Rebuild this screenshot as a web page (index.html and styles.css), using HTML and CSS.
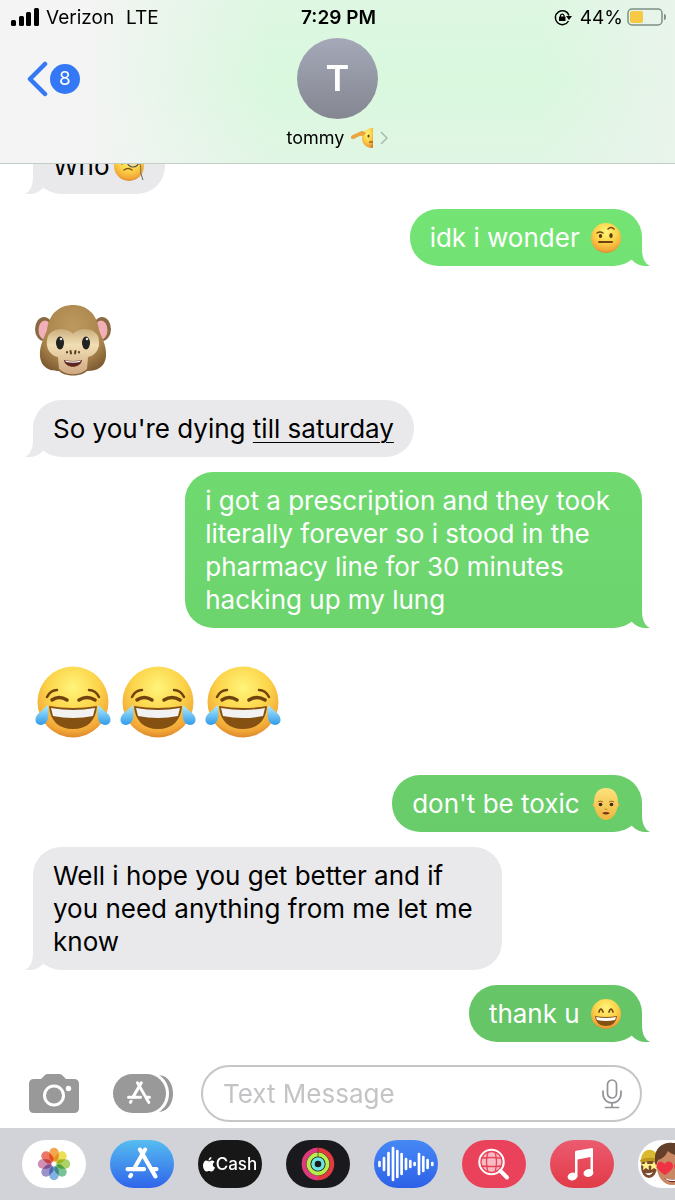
FILE: index.html
```html
<!DOCTYPE html>
<html lang="en">
<head>
	<meta charset="utf-8">
	<meta name="viewport" content="width=device-width, initial-scale=1">
	<title>tommy</title>
	<link rel="stylesheet" href="styles.css">
</head>
<body>
<!-- shared emoji and glyph shapes -->
<svg class="defs" width="0" height="0" aria-hidden="true">
	<defs>
		<radialGradient id="face" cx="50%" cy="30%" r="72%">
			<stop offset="0" stop-color="#fff57a"/>
			<stop offset="0.5" stop-color="#fcd44a"/>
			<stop offset="0.85" stop-color="#f2a838"/>
			<stop offset="1" stop-color="#d9822b"/>
		</radialGradient>
		<linearGradient id="skin" x1="0" y1="0" x2="0" y2="1">
			<stop offset="0" stop-color="#ffe27c"/>
			<stop offset="1" stop-color="#edb63e"/>
		</linearGradient>
		<linearGradient id="tear" x1="0" y1="0" x2="0" y2="1">
			<stop offset="0" stop-color="#b4ecfb"/>
			<stop offset="1" stop-color="#2f9bea"/>
		</linearGradient>
		<radialGradient id="fur" cx="50%" cy="30%" r="70%">
			<stop offset="0" stop-color="#bd9960"/>
			<stop offset="0.7" stop-color="#a88249"/>
			<stop offset="1" stop-color="#7d5c33"/>
		</radialGradient>
		<linearGradient id="muzzle" x1="0" y1="0" x2="0" y2="1">
			<stop offset="0" stop-color="#cbb080"/>
			<stop offset="0.35" stop-color="#f1deb4"/>
			<stop offset="1" stop-color="#cfa880"/>
		</linearGradient>
		<symbol id="emoji-joy" viewBox="0 0 76 76">
			<circle cx="38" cy="38" r="35.500" fill="url(#face)"/>
			<g fill="none" stroke="#70420d" stroke-width="2.500" stroke-linecap="round">
				<path d="M12 33C14 29 18 26 22 26"/>
				<path d="M64 33C62 29 58 26 54 26"/>
				<path d="M17 36Q24 31 32 36" stroke-width="3.500"/>
				<path d="M44 36Q52 31 60 36" stroke-width="3.500"/>
			</g>
			<path d="M14 42Q38 46 62 42C61 57 52 65 38 65C24 65 15 57 14 42Z" fill="#855112"/>
			<path d="M16 44Q38 48 60 44L58 52Q38 56 18 52Z" fill="#f2f2f3"/>
			<path d="M13 41C14 51 14 60 6 61C-1 61 -1 53 4 49Z" fill="url(#tear)"/>
			<path d="M63 41C62 51 62 60 70 61C77 61 77 53 72 49Z" fill="url(#tear)"/>
		</symbol>
		<symbol id="emoji-monkey" viewBox="0 0 76 76">
			<ellipse cx="9" cy="27" rx="9" ry="12" fill="#8a6a42"/>
			<ellipse cx="67" cy="27" rx="9" ry="12" fill="#8a6a42"/>
			<ellipse cx="10" cy="28" rx="6.500" ry="9.500" fill="#f1b0b7"/>
			<ellipse cx="66" cy="28" rx="6.500" ry="9.500" fill="#f1b0b7"/>
			<path d="M38 3C51 3 62 11 64 28C66 34 72 44 71 54C70 66 61 69 52 69C46 75 30 75 24 69C15 69 6 66 5 54C4 44 10 34 12 28C14 11 25 3 38 3Z" fill="url(#fur)"/>
			<path d="M38 32C43 26 58 25 63 34C67 46 60 54 53 55L52 67C45 74 31 74 24 67L23 55C16 54 9 46 13 34C18 25 33 26 38 32Z" fill="url(#muzzle)"/>
			<ellipse cx="25" cy="41" rx="4" ry="6.500" fill="#222"/>
			<ellipse cx="51" cy="41" rx="4" ry="6.500" fill="#222"/>
			<circle cx="26" cy="37" r="1.300" fill="#ddd"/>
			<circle cx="52" cy="37" r="1.300" fill="#ddd"/>
			<path d="M35.500 49L36 51.500M40.500 49L40 51.500M32 50V50.500M44 50V50.500" stroke="#574024" stroke-width="2" stroke-linecap="round"/>
			<path d="M29 58Q38 60 47 58C46 67 30 67 29 58Z" fill="#5e2621"/>
			<path d="M30 58.500Q38 60.500 46 58.500L45 60Q38 61.500 31 60Z" fill="#fff"/>
		</symbol>
		<symbol id="emoji-eyebrow" viewBox="0 0 32 32">
			<circle cx="16" cy="16" r="15" fill="url(#face)"/>
			<g fill="none" stroke="#70420d" stroke-width="1.500" stroke-linecap="round">
				<path d="M7 11Q10 9 13 11"/>
				<path d="M18 7Q21 4 24 7"/>
				<path d="M9 20H22" stroke-width="2"/>
			</g>
			<ellipse cx="10.500" cy="14" rx="1.700" ry="2" fill="#5b390e"/>
			<ellipse cx="21" cy="13.500" rx="1.700" ry="2.500" fill="#5b390e"/>
		</symbol>
		<symbol id="emoji-monocle" viewBox="0 0 32 32">
			<circle cx="16" cy="16" r="15" fill="url(#face)"/>
			<circle cx="20" cy="11" r="6" fill="#f3e29a" stroke="#57564f" stroke-width="1.200"/>
			<ellipse cx="20" cy="11" rx="1.700" ry="2.400" fill="#5b390e"/>
			<ellipse cx="9" cy="12" rx="1.700" ry="2.400" fill="#5b390e"/>
			<path d="M11 20Q15 17 19 20" fill="none" stroke="#855112" stroke-width="1.500" stroke-linecap="round"/>
			<path d="M26 12C29 17 27 21 28 24L30 30" fill="none" stroke="#66655f"/>
		</symbol>
		<symbol id="emoji-bald" viewBox="0 0 32 32">
			<circle cx="4.500" cy="17" r="2" fill="#eab447"/>
			<circle cx="27.500" cy="17" r="2" fill="#eab447"/>
			<path d="M16 0C24 0 28 6 28 14C28 25 22 32 16 32C10 32 4 25 4 14C4 6 8 0 16 0Z" fill="url(#skin)"/>
			<path d="M8 14Q10 12 13 14M19 14Q22 12 24 14" fill="none" stroke="#9b6a20"/>
			<circle cx="10.500" cy="16.500" r="1.800" fill="#3b2b16"/>
			<circle cx="21.500" cy="16.500" r="1.800" fill="#3b2b16"/>
			<path d="M14.500 21Q16 22 17.500 21" fill="none" stroke="#c28a2b"/>
			<path d="M12 25Q16 23 20 25Q16 28 12 25Z" fill="#7d2f22"/>
		</symbol>
		<symbol id="emoji-grin" viewBox="0 0 32 32">
			<circle cx="16" cy="16" r="15" fill="url(#face)"/>
			<path d="M9 14Q11 8 13 14M19 14Q21 8 23 14" fill="none" stroke="#70420d" stroke-width="1.700" stroke-linecap="round"/>
			<path d="M5 18Q16 20 27 18C26 25 22 28 16 28C10 28 6 25 5 18Z" fill="#855112"/>
			<path d="M6 19Q16 21 26 19L25 22Q16 24 7 22Z" fill="#fff"/>
		</symbol>
		<symbol id="emoji-salute" viewBox="0 0 22 22">
			<path d="M22 1V21C15 21 11 17 11 11C11 6 15 1 22 1Z" fill="url(#face)"/>
			<path d="M0 11C0 8 6 7 9 5C12 4 15 5 14 7C12 9 10 8 8 9C5 10 3 13 0 11Z" fill="#f2a63a" stroke="#d98a2c" stroke-width="0.500"/>
			<ellipse cx="17.500" cy="9" rx="1" ry="1.600" fill="#5b390e"/>
			<path d="M18 15H22" stroke="#70420d"/>
		</symbol>
		<symbol id="app-store-a" viewBox="0 0 32 32">
			<g fill="none" stroke="#fff" stroke-width="4" stroke-linecap="round">
				<path d="M19 2.500L8 21.500"/>
				<path d="M14 2.500L29 28.500"/>
				<path d="M2 21.500H18M26 21.500H30"/>
				<path d="M5.500 27L4.500 28.500"/>
			</g>
		</symbol>
	</defs>
</svg>

<div class="app">
	<header class="header">
		<div class="status">
			<div class="carrier">
				<svg width="29" height="18" viewBox="0 0 29 18" aria-hidden="true">
					<rect x="0" y="12" width="5" height="6" rx="1.500"/>
					<rect x="8" y="8" width="5" height="10" rx="1.500"/>
					<rect x="15" y="4" width="5" height="14" rx="1.500"/>
					<rect x="23" y="0" width="5" height="18" rx="1.500"/>
				</svg>
				<span>Verizon</span>
				<span class="network">LTE</span>
			</div>
			<time>7:29 PM</time>
			<div class="power">
				<svg class="lock" width="18" height="17" viewBox="0 0 18 17" aria-hidden="true">
					<path d="M14.500 12A7 7 0 1 1 15 6.500" fill="none" stroke="#000" stroke-width="1.500"/>
					<path d="M12 7H18L15 11Z"/>
					<rect x="5" y="7.500" width="6.500" height="4.500" rx="0.500"/>
					<path d="M6.500 8V6.500A1.800 1.800 0 0 1 10 6.500V8" fill="none" stroke="#000" stroke-width="1.200"/>
				</svg>
				<span>44%</span>
				<svg width="39" height="18" viewBox="0 0 39 18" aria-hidden="true">
					<rect x="1" y="1" width="34" height="16" rx="4" fill="none" stroke="#7d9082" stroke-width="1.500"/>
					<rect x="3" y="3" width="13" height="12" rx="2" fill="#f7c844"/>
					<path d="M37 6Q39 6 39 9Q39 12 37 12Z" fill="#7d9082"/>
				</svg>
			</div>
		</div>
		<div class="nav">
			<button class="back" type="button" aria-label="Back, 8 unread">
				<svg width="21" height="36" viewBox="0 0 21 36" aria-hidden="true">
					<path d="M18 3L3 18L18 33" fill="none" stroke="#3478f6" stroke-width="4.500" stroke-linecap="round" stroke-linejoin="round"/>
				</svg>
				<span class="badge">8</span>
			</button>
			<button class="contact" type="button">
				<span class="avatar">T</span>
				<span class="name">tommy
					<svg width="22" height="22" role="img" aria-label="saluting face"><use href="#emoji-salute"/></svg>
					<svg width="8" height="14" viewBox="0 0 8 14" aria-hidden="true"><path d="M1 1L7 7L1 13" fill="none" stroke="#a9bbad" stroke-width="1.500"/></svg>
				</span>
			</button>
		</div>
	</header>

	<main class="thread">
		<p class="bubble received">Who<svg class="inline" role="img" aria-label="face with monocle"><use href="#emoji-monocle"/></svg></p>
		<p class="bubble sent">idk i wonder <svg class="inline" role="img" aria-label="raised eyebrow"><use href="#emoji-eyebrow"/></svg></p>
		<p class="emoji">
			<svg role="img" aria-label="monkey face"><use href="#emoji-monkey"/></svg>
		</p>
		<p class="bubble received">So you're dying <a href="#saturday">till saturday</a></p>
		<p class="bubble sent">i got a prescription and they took literally forever so i stood in the pharmacy line for 30 minutes hacking up my lung</p>
		<p class="emoji">
			<svg role="img" aria-label="tears of joy"><use href="#emoji-joy"/></svg>
			<svg role="img" aria-label="tears of joy"><use href="#emoji-joy"/></svg>
			<svg role="img" aria-label="tears of joy"><use href="#emoji-joy"/></svg>
		</p>
		<p class="bubble sent">don't be toxic <svg class="inline" role="img" aria-label="bald person"><use href="#emoji-bald"/></svg></p>
		<p class="bubble received">Well i hope you get better and if you need anything from me let me know</p>
		<p class="bubble sent">thank u <svg class="inline" role="img" aria-label="grinning face"><use href="#emoji-grin"/></svg></p>
	</main>

	<form class="composer">
		<button class="camera" type="button" aria-label="Camera">
			<svg width="50" height="39" viewBox="0 0 50 39">
				<path d="M5 5H12L16 1Q17 0 19 0H30Q32 0 33 1L37 5H45Q50 5 50 10V34Q50 39 45 39H5Q0 39 0 34V10Q0 5 5 5Z" fill="#999"/>
				<circle cx="25" cy="21.500" r="9.500" fill="none" stroke="#fff" stroke-width="3"/>
				<circle cx="39.500" cy="14.500" r="2.700" fill="#fff"/>
			</svg>
		</button>
		<button type="button" aria-label="Apps">
			<svg width="60" height="39" viewBox="0 0 60 39">
				<path d="M46 1C56 2 60 11 60 19.500C60 28 56 37 46 38C52 34 56 28 56 19.500C56 11 52 5 46 1Z" fill="#999"/>
				<rect width="53" height="39" rx="19.500" fill="#999"/>
				<use href="#app-store-a" x="13" y="7" width="26" height="24"/>
			</svg>
		</button>
		<div class="field">
			<input type="text" placeholder="Text Message" aria-label="Text Message">
			<button type="button" aria-label="Dictate">
				<svg width="20" height="30" viewBox="0 0 20 30" fill="none" stroke="#939397" stroke-width="1.700" stroke-linecap="round">
					<rect x="5.500" y="1" width="9" height="18" rx="4.500"/>
					<path d="M1 12V14.500C1 27 19 27 19 14.500V12M10 24V28.500M3.500 28.500H16.500"/>
				</svg>
			</button>
		</div>
	</form>

	<nav class="apps">
		<button class="photos" type="button" aria-label="Photos">
			<svg width="64" height="48" viewBox="0 0 64 48">
				<g class="petals" stroke-width="9.500" stroke-linecap="round">
					<path d="M32 12.500V17" stroke="#f5972f"/>
					<path d="M40 16L37 19" stroke="#e9d93c"/>
					<path d="M43.500 24H39" stroke="#9ccb4e"/>
					<path d="M40 32L37 29" stroke="#63b983"/>
					<path d="M32 35.500V31" stroke="#6ba5dd"/>
					<path d="M24 32L27 29" stroke="#8b7fc0"/>
					<path d="M20.500 24H25" stroke="#ca7ba9"/>
					<path d="M24 16L27 19" stroke="#e8604c"/>
				</g>
				<circle cx="32" cy="24" r="1.500" fill="#fff"/>
			</svg>
		</button>
		<button class="store" type="button" aria-label="App Store">
			<svg width="64" height="48" viewBox="0 0 64 48"><use href="#app-store-a" x="15" y="7" width="34" height="33"/></svg>
		</button>
		<button class="cash" type="button" aria-label="Apple Cash">
			<svg width="12" height="15" viewBox="0 0 24 30" fill="#fff" aria-hidden="true">
				<path d="M17 0C17 4 14 7 11 7C11 3 14 0 17 0Z"/>
				<path d="M12 9C14 9 15 7 18 7C20 7 22 8 23 10C18 13 19 19 24 21C22 26 20 29 17 29C15 29 14 28 12 28C10 28 9 29 7 29C3 29 0 22 0 17C0 11 3 7 7 7C9 7 11 9 12 9Z"/>
			</svg>
			<span>Cash</span>
		</button>
		<button class="activity" type="button" aria-label="Fitness">
			<svg width="64" height="48" viewBox="0 0 64 48" fill="none">
				<circle cx="32" cy="24" r="14" stroke="#e23a3f" stroke-width="4.500"/>
				<path d="M32 10A14 14 0 0 0 32 38" stroke="#db3a7e" stroke-width="4.500"/>
				<circle cx="32" cy="24" r="9.500" stroke="#b5ef4b" stroke-width="3.800"/>
				<circle cx="32" cy="24" r="5" stroke="#6fe3df" stroke-width="3.500"/>
				<path d="M32 8V17" stroke="#6b2029" stroke-width="0.700"/>
			</svg>
		</button>
		<button class="audio" type="button" aria-label="Audio messages">
			<svg width="64" height="48" viewBox="0 0 64 48" stroke="#fff" stroke-width="2.700" stroke-linecap="round">
				<path d="M5.500 22V26M10 18V30M14.500 13V35M19 8V40M23.300 11V37M27.600 14V34M32 19V29M36.300 21V27M40.600 23V25M45 14V34M49.300 17V31M53.600 20V28M58.300 23V25"/>
			</svg>
		</button>
		<button class="images" type="button" aria-label="#images">
			<svg width="64" height="48" viewBox="0 0 64 48" fill="none">
				<circle cx="29.500" cy="22" r="12" fill="#f9bcc5" stroke="#fff" stroke-width="2.500"/>
				<g stroke="#e9445a" stroke-width="1.300">
					<circle cx="29.500" cy="22" r="10.500"/>
					<path d="M26 12Q23 22 26 32M33 12Q36 22 33 32M19 18Q29 17 40 18M19 26Q29 27 40 26"/>
				</g>
				<path d="M38.500 31L45 37.500" stroke="#fff" stroke-width="4" stroke-linecap="round"/>
			</svg>
		</button>
		<button class="music" type="button" aria-label="Music">
			<svg width="64" height="48" viewBox="0 0 64 48" fill="#fff">
				<path d="M25 12Q25 11 26 10.800L42 8Q43 8 43 9V33H40.500V17L27.500 19.500V37H25Z"/>
				<ellipse cx="22.500" cy="36.500" rx="5" ry="3.800" transform="rotate(-15 22.500 36.500)"/>
				<ellipse cx="38.500" cy="33" rx="5" ry="3.800" transform="rotate(-15 38.500 33)"/>
			</svg>
		</button>
		<button class="memoji" type="button" aria-label="Memoji">
			<svg width="64" height="48" viewBox="0 0 64 48">
				<ellipse cx="11" cy="27" rx="8" ry="11" fill="#7a4b2c"/>
				<path d="M3 22C2 6 20 6 20 20Z" fill="#d9b92f"/>
				<path d="M2 20Q10 16 20 19V22Q10 19 3 23Z" fill="#bd981f"/>
				<path d="M8 21L9.500 24L13 24L10.500 26.500L11 30L8 28L5 30L5.500 26.500L3 24L6.500 24Z" fill="#fff08a"/>
				<path d="M16 21L17.500 24L20 24L18.500 27L19 30L16 28L13 30L13.500 26.500L11 24L14.500 24Z" fill="#fff08a"/>
				<path d="M7 33Q11 34 15 32Q12 38 7 33Z" fill="#fff"/>
				<ellipse cx="34" cy="27" rx="15" ry="18" fill="#c98764"/>
				<path d="M18 26C13 8 26 1 35 3C47 2 53 13 50 26L46 16Q34 16 30 11Q26 19 20 20Z" fill="#64402b"/>
				<path d="M27 35C19 30 18 27 19 24C21 20 25 22 27 24C29 20 34 21 35 25C36 29 30 33 27 35Z" fill="#ef3344"/>
				<path d="M44 34C36 31 35 27 37 23C39 20 43 22 43 24C46 20 51 23 51 27C50 30 48 32 44 34Z" fill="#ef3344"/>
				<path d="M26 38Q34 41 42 37Q36 47 26 38Z" fill="#6b2825"/>
				<path d="M27 38Q34 41 41 38L39 40Q34 42 29 40Z" fill="#fff"/>
			</svg>
		</button>
	</nav>
</div>
</body>
</html>
```

FILE: styles.css
```css
* {
	box-sizing: border-box;
}
body {
	margin: 0;
	font-family: Inter, "Liberation Sans", sans-serif;
	color: #000;
	background: white;
}
button {
	padding: 0;
	border: 0;
	background: none;
	font: inherit;
	color: inherit;
}
svg {
	display: block;
	flex: none;
}
.defs {
	position: absolute;
}
.app {
	display: flex;
	flex-direction: column;
	height: 100vh;
	overflow: hidden;
}

/* header */
.header {
	flex: none;
	border-bottom: 1px solid #c3cfc6;
	background:
		linear-gradient(to right, #f4f4f4 12%, rgba(244, 244, 244, 0) 40%),
		linear-gradient(to left, #e9f4eb, rgba(233, 244, 235, 0) 20%),
		linear-gradient(to bottom, #def7e2, #d9f8de 50%, #e1f6e5);
}
.status {
	display: grid;
	grid-template-columns: 1fr auto 1fr;
	align-items: center;
	height: 34px;
	padding: 0 9px 0 11px;
	font-size: 19px;
}
.status time {
	font-weight: 600;
}
.carrier,
.power {
	display: flex;
	align-items: center;
	gap: 6px;
}
.network {
	margin-left: 6px;
}
.power {
	justify-content: flex-end;
	gap: 4px;
}
.lock {
	margin-right: 4px;
}
.nav {
	display: grid;
	grid-template-columns: 1fr auto 1fr;
	padding: 4px 27px 14px;
}
.back {
	display: flex;
	align-items: center;
	justify-self: start;
	gap: 2px;
	height: 81px;
}
.badge {
	width: 30px;
	border-radius: 50%;
	background: #3478f6;
	color: white;
	font-size: 19px;
	line-height: 30px;
	text-align: center;
}
.contact {
	display: flex;
	flex-direction: column;
	align-items: center;
	gap: 8px;
}
.avatar {
	width: 81px;
	border-radius: 50%;
	background: linear-gradient(#a5a8b8, #848790);
	color: white;
	font-size: 36px;
	font-weight: 600;
	line-height: 81px;
}
.name {
	display: flex;
	align-items: center;
	gap: 7px;
	font-size: 18px;
	line-height: 22px;
}

/* messages, newest pinned to the bottom */
.thread {
	flex: 1;
	min-height: 0;
	display: flex;
	flex-direction: column;
	justify-content: flex-end;
	gap: 15px;
	padding: 0 33px 23px;
	overflow: hidden;
	font-size: 26px;
	line-height: 33px;
}
.thread p {
	flex: none;
	margin: 0;
}
.bubble {
	position: relative;
	padding: 12px 20px;
	border-radius: 28px;
}
.bubble::after {
	content: "";
	position: absolute;
	bottom: 0;
	width: 28px;
	height: 28px;
	background: inherit;
	clip-path: path("M20 0V10C20 19 22 25 28 28C20 29 14 26 10 22L0 10V0Z");
}
.received {
	align-self: flex-start;
	max-width: 77%;
	background: #e9e9eb;
}
.received::after {
	left: -8px;
	transform: scaleX(-1);
}
.sent {
	align-self: flex-end;
	max-width: 75%;
	color: white;
	background: linear-gradient(#74e575 15%, #66c567 85%) fixed;
}
.sent::after {
	right: -8px;
}
.bubble a {
	color: inherit;
	text-decoration-thickness: 1px;
	text-underline-offset: 4px;
}
.inline {
	display: inline-block;
	width: 32px;
	height: 32px;
	margin: -4px 0 0 3px;
	vertical-align: middle;
}
.emoji {
	display: flex;
	gap: 9px;
	padding: 21px 2px 7px;
}
.emoji:has(+ .sent) {
	padding-bottom: 20px;
}
.emoji svg {
	width: 76px;
	height: 76px;
}

/* text entry */
.composer {
	flex: none;
	display: flex;
	align-items: center;
	gap: 28px;
	padding: 0 33px 6px 29px;
}
.camera {
	margin-right: 6px;
}
.field {
	flex: 1;
	min-width: 0;
	display: flex;
	align-items: center;
	height: 57px;
	padding: 0 18px 0 20px;
	border: 2px solid #c6c6c8;
	border-radius: 29px;
}
.field input {
	flex: 1;
	min-width: 0;
	padding: 0;
	border: 0;
	outline: 0;
	background: none;
	font: inherit;
	font-size: 26px;
}
.field input::placeholder {
	color: #c4c4c7;
}

/* app drawer */
.apps {
	flex: none;
	display: flex;
	gap: 24px;
	padding: 12px 0 12px 22px;
	overflow: hidden;
	background: #d1d3d9;
}
.apps button {
	flex: none;
	width: 64px;
	height: 48px;
	border-radius: 24px;
	overflow: hidden;
}
.apps .photos,
.apps .memoji {
	background: white;
}
.petals > * {
	mix-blend-mode: multiply;
	opacity: 0.85;
}
.apps .store {
	background: linear-gradient(#56bdf0, #2f64ea);
}
.apps .cash {
	display: flex;
	align-items: center;
	justify-content: center;
	gap: 1px;
	background: #171717;
	color: white;
	font-size: 17px;
	font-weight: 500;
}
.apps .activity {
	background: #1a1a1e;
}
.apps .audio {
	background: linear-gradient(#4688f5, #2d61e8);
}
.apps .images {
	background: #e9425a;
}
.apps .music {
	background: linear-gradient(#ec5b70, #e13a47);
}
```
